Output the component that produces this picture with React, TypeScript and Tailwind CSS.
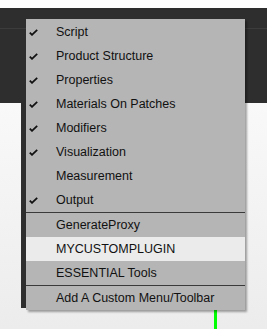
import React from "react";

const items = [
  { label: "Script", checked: true },
  { label: "Product Structure", checked: true },
  { label: "Properties", checked: true },
  { label: "Materials On Patches", checked: true },
  { label: "Modifiers", checked: true },
  { label: "Visualization", checked: true },
  { label: "Measurement", checked: false },
  { label: "Output", checked: true },
];

const plugins = ["GenerateProxy", "MYCUSTOMPLUGIN", "ESSENTIAL Tools"];

function Check() {
  return (
    <svg width="9" height="7" viewBox="0 0 9 7" className="block">
      <path d="M0.8 3.6 L3 5.8 L8.2 0.8" fill="none" stroke="#111" strokeWidth="1.8" />
    </svg>
  );
}

function Row({ label, checked, active }: { label: string; checked?: boolean; active?: boolean }) {
  return (
    <div className={`flex h-6 items-center ${active ? "bg-[#ebebeb]" : ""}`}>
      <div className="w-[30px] pl-[3px]">{checked && <Check />}</div>
      <span className="text-[12.5px] text-[#111]">{label}</span>
    </div>
  );
}

export default function App() {
  return (
    <div className="relative h-[329px] w-[267px] overflow-hidden bg-gradient-to-b from-white to-[#ececec] font-['Liberation_Sans',sans-serif]">
      <div className="h-2 bg-white" />
      <div className="h-[95px] bg-[#2e2e2e] pt-5">
        <div className="h-px bg-[#3c3c3c]" />
      </div>
      <div className="ml-[21px] h-[205px] w-[5px] bg-[#2e2e2e]" />
      <div className="ml-[214px] h-[30px] w-[3px] bg-[#00ff00]" />

      <div className="absolute left-[26px] top-[19px] w-[219px] bg-[#b5b5b5] pt-px shadow-[2px_2px_2px_rgba(0,0,0,0.35)]">
        {items.map((it) => (
          <Row key={it.label} label={it.label} checked={it.checked} />
        ))}
        <div className="h-px bg-[#3a3a3a]" />
        {plugins.map((p) => (
          <Row key={p} label={p} active={p === "MYCUSTOMPLUGIN"} />
        ))}
        <div className="h-px bg-[#3a3a3a]" />
        <Row label="Add A Custom Menu/Toolbar" />
      </div>
    </div>
  );
}
